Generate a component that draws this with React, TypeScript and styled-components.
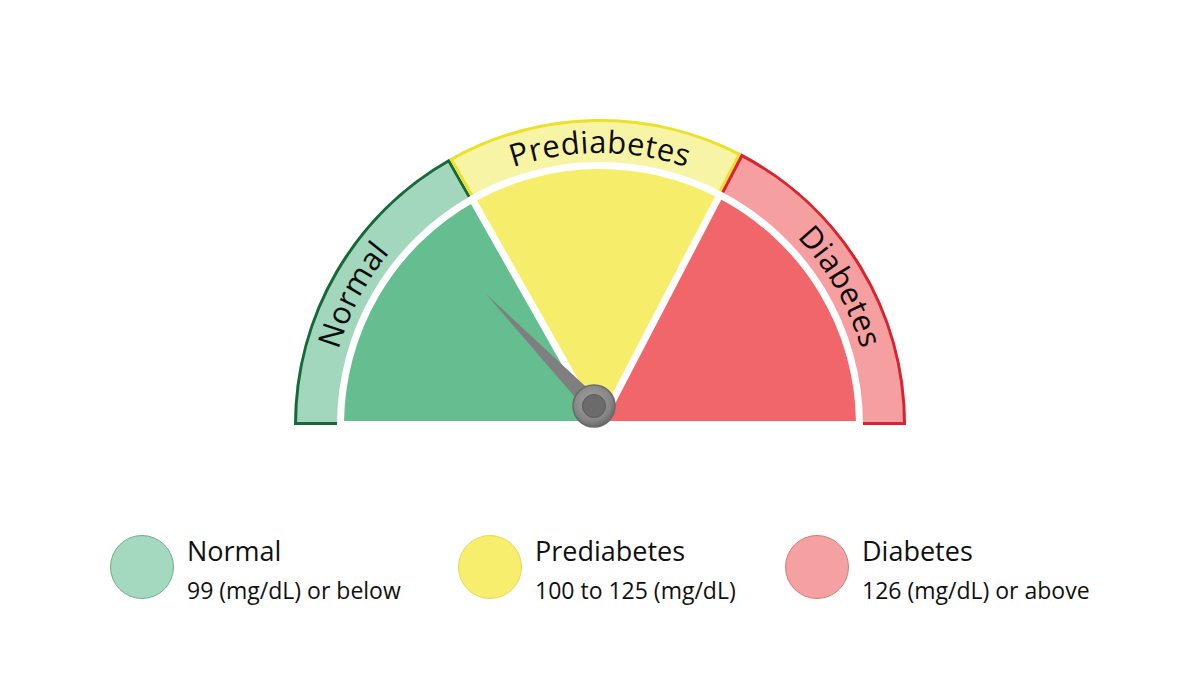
import React from 'react'
import styled, { createGlobalStyle } from 'styled-components'

const GlobalStyle = createGlobalStyle`
  html, body {
    margin: 0;
    padding: 0;
    background: #ffffff;
  }
  body {
    font-family: "Open Sans", "DejaVu Sans", sans-serif;
    color: #111111;
  }
`

// gauge geometry (svg local coords)
const CX = 310
const CY = 313
const R_OUT = 306
const R_IN = 263
const R_PIE = 256
const R_TEXT = 272
const SPLIT_LEFT = 119.5
const SPLIT_RIGHT = 62.5

const pt = (r: number, deg: number) => {
  const a = (deg * Math.PI) / 180
  return `${(CX + r * Math.cos(a)).toFixed(2)} ${(CY - r * Math.sin(a)).toFixed(2)}`
}

const bandPath = (a1: number, a2: number) =>
  `M ${pt(R_OUT, a1)} A ${R_OUT} ${R_OUT} 0 0 1 ${pt(R_OUT, a2)} L ${pt(R_IN, a2)} A ${R_IN} ${R_IN} 0 0 0 ${pt(R_IN, a1)} Z`

const bandEdge = (a1: number, a2: number) =>
  `M ${pt(R_IN, a1)} L ${pt(R_OUT, a1)} A ${R_OUT} ${R_OUT} 0 0 1 ${pt(R_OUT, a2)} L ${pt(R_IN, a2)}`

const piePath = (a1: number, a2: number) =>
  `M ${CX} ${CY} L ${pt(R_PIE, a1)} A ${R_PIE} ${R_PIE} 0 0 1 ${pt(R_PIE, a2)} Z`

const zones = [
  { id: 'normal', from: 180, to: SPLIT_LEFT, band: '#a3d7bd', line: '#17693a', pie: '#64be90' },
  { id: 'pre', from: SPLIT_LEFT, to: SPLIT_RIGHT, band: '#f8f4a6', line: '#ece02a', pie: '#f6ee6b' },
  { id: 'diab', from: SPLIT_RIGHT, to: 0, band: '#f59fa1', line: '#d9232e', pie: '#f0666b' },
]

const arcLabels = [
  { text: 'Normal', offset: '15.4%' },
  { text: 'Prediabetes', offset: '50%' },
  { text: 'Diabetes', offset: '83.4%' },
]

const legend = [
  { title: 'Normal', range: '99 (mg/dL) or below', fill: '#a4d8bf', edge: '#72ae8e' },
  { title: 'Prediabetes', range: '100 to 125 (mg/dL)', fill: '#f6ee6c', edge: '#e4da55' },
  { title: 'Diabetes', range: '126 (mg/dL) or above', fill: '#f5a1a2', edge: '#d9797c' },
]

const splitLine = (deg: number) => {
  const a = (deg * Math.PI) / 180
  return { x2: CX + 262 * Math.cos(a), y2: CY - 262 * Math.sin(a) }
}

const Page = styled.div`
  width: 1200px;
  height: 675px;
  overflow: hidden;
  display: flex;
  flex-direction: column;
  align-items: center;
`

const GaugeWrap = styled.div`
  margin-top: 112px;
  width: 620px;
  height: 318px;

  svg {
    display: block;
  }
`

const ArcText = styled.text`
  font-family: "Open Sans", "DejaVu Sans", sans-serif;
  font-size: 31px;
  letter-spacing: 0.4px;
  fill: #0d0d0d;
`

const Legend = styled.div`
  align-self: stretch;
  margin-top: 105px;
  padding-left: 110px;
  display: grid;
  grid-template-columns: 348px 327px auto;
`

const LegendItem = styled.div`
  display: flex;
  align-items: flex-start;
  gap: 13px;
`

const Swatch = styled.div<{ $fill: string; $edge: string }>`
  flex: none;
  width: 64px;
  height: 64px;
  border-radius: 50%;
  background: ${(p) => p.$fill};
  border: 1px solid ${(p) => p.$edge};
  box-sizing: border-box;
`

const LegendText = styled.div`
  display: flex;
  flex-direction: column;
`

const LegendTitle = styled.span`
  font-size: 27px;
  line-height: 32px;
  color: #111111;
`

const LegendRange = styled.span`
  margin-top: 9px;
  font-size: 23px;
  line-height: 28px;
  color: #111111;
`

const Gauge = () => (
  <svg width="620" height="318" viewBox="0 0 620 318">
    <defs>
      {zones.map((z) => (
        <clipPath key={z.id} id={`clip-${z.id}`}>
          <path d={bandPath(z.from, z.to)} />
        </clipPath>
      ))}
      <clipPath id="clip-pie">
        <rect x="0" y="0" width="620" height={CY - 4} />
      </clipPath>
      <radialGradient id="hubRing" cx="45%" cy="40%" r="65%">
        <stop offset="0%" stopColor="#a2a2a2" />
        <stop offset="70%" stopColor="#858585" />
        <stop offset="100%" stopColor="#5e5e5e" />
      </radialGradient>
      <path id="labelArc" d={`M ${CX - R_TEXT} ${CY} A ${R_TEXT} ${R_TEXT} 0 0 1 ${CX + R_TEXT} ${CY}`} />
    </defs>

    {zones.map((z) => (
      <g key={z.id}>
        <path d={bandPath(z.from, z.to)} fill={z.band} />
        <path
          d={bandEdge(z.from, z.to)}
          fill="none"
          stroke={z.line}
          strokeWidth="6"
          clipPath={`url(#clip-${z.id})`}
        />
      </g>
    ))}

    <g clipPath="url(#clip-pie)">
      {zones.map((z) => (
        <path key={z.id} d={piePath(z.from, z.to)} fill={z.pie} />
      ))}
      <line x1={CX} y1={CY} {...splitLine(SPLIT_LEFT)} stroke="#ffffff" strokeWidth="7" />
      <line x1={CX} y1={CY} {...splitLine(SPLIT_RIGHT)} stroke="#ffffff" strokeWidth="7" />
    </g>

    {arcLabels.map((l) => (
      <ArcText key={l.text} textAnchor="middle">
        <textPath href="#labelArc" startOffset={l.offset}>
          {l.text}
        </textPath>
      </ArcText>
    ))}

    <polygon points="196,182 297.8,300 310.2,288.1" fill="#7f7f7f" />
    <circle cx="304" cy="294" r="21" fill="url(#hubRing)" stroke="#6a6a6a" strokeWidth="1.5" />
    <circle cx="304" cy="294" r="11.5" fill="#6b6b6b" stroke="#5a5a5a" strokeWidth="1" />
  </svg>
)

export default function App() {
  return (
    <Page>
      <GlobalStyle />
      <GaugeWrap>
        <Gauge />
      </GaugeWrap>
      <Legend>
        {legend.map((item) => (
          <LegendItem key={item.title}>
            <Swatch $fill={item.fill} $edge={item.edge} />
            <LegendText>
              <LegendTitle>{item.title}</LegendTitle>
              <LegendRange>{item.range}</LegendRange>
            </LegendText>
          </LegendItem>
        ))}
      </Legend>
    </Page>
  )
}
